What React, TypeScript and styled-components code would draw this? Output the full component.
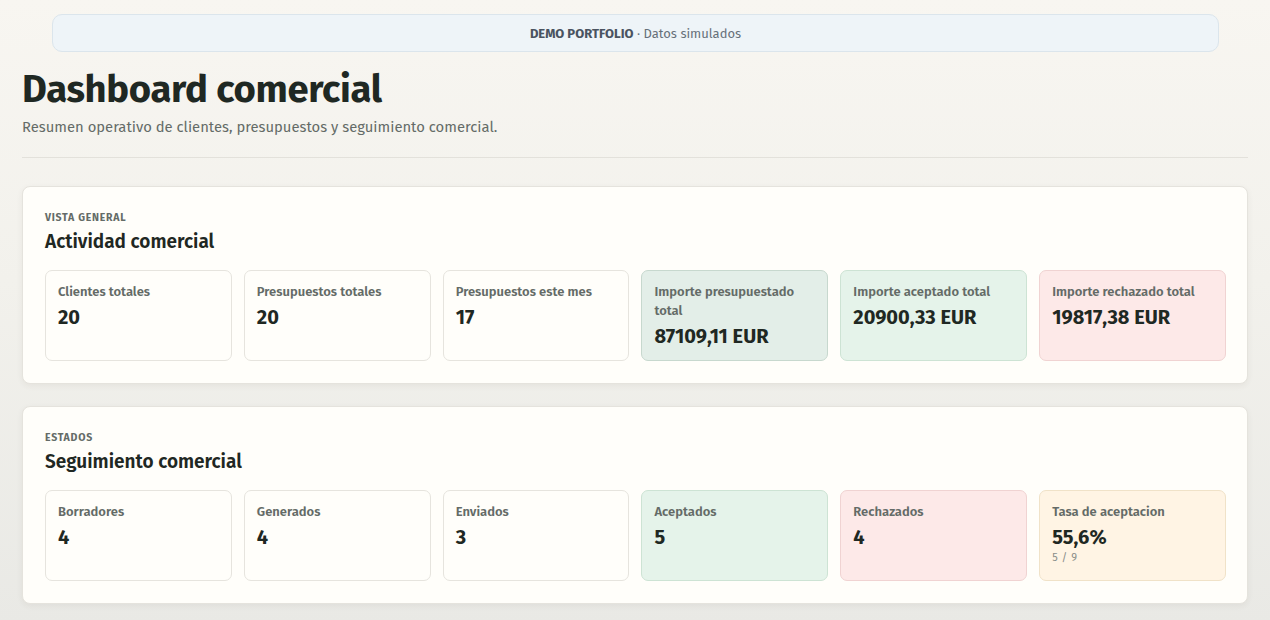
import React from 'react';
import styled, { createGlobalStyle } from 'styled-components';

type Tone = 'neutral' | 'slate' | 'green' | 'red' | 'amber';

interface Stat {
    label: string;
    value: string;
    note?: string;
    tone?: Tone;
}

const activity: Array<Stat> = [
    { label: 'Clientes totales', value: '20' },
    { label: 'Presupuestos totales', value: '20' },
    { label: 'Presupuestos este mes', value: '17' },
    { label: 'Importe presupuestado total', value: '87109,11 EUR', tone: 'slate' },
    { label: 'Importe aceptado total', value: '20900,33 EUR', tone: 'green' },
    { label: 'Importe rechazado total', value: '19817,38 EUR', tone: 'red' },
];

const states: Array<Stat> = [
    { label: 'Borradores', value: '4' },
    { label: 'Generados', value: '4' },
    { label: 'Enviados', value: '3' },
    { label: 'Aceptados', value: '5', tone: 'green' },
    { label: 'Rechazados', value: '4', tone: 'red' },
    { label: 'Tasa de aceptacion', value: '55,6%', note: '5 / 9', tone: 'amber' },
];

const tones: Record<Tone, { bg: string; border: string }> = {
    neutral: { bg: '#fffefa', border: '#e6e4de' },
    slate: { bg: '#e3eee8', border: '#c7d8ce' },
    green: { bg: '#e5f3ea', border: '#cde3d4' },
    red: { bg: '#fde9e8', border: '#f0d3d2' },
    amber: { bg: '#fff4e4', border: '#f0e2c8' },
};

const dark = `#1f2823`;
const muted = `#646b67`;

const GlobalStyle = createGlobalStyle`
    html, body {
        margin: 0;
        padding: 0;
    }
    body {
        min-height: 620px;
        background: linear-gradient(180deg, #f8f6f1 0%, #f2f1ec 45%, #e9e9e5 100%);
        font-family: "Fira Sans", "Noto Sans", "Open Sans", sans-serif;
        color: ${dark};
    }
`;

const Page = styled.main`
    padding: 14px 22px 20px;
    display: flex;
    flex-direction: column;
`;

const Banner = styled.div`
    margin: 0 29px 0 30px;
    height: 38px;
    box-sizing: border-box;
    border: 1px solid #dbe5ec;
    border-radius: 10px;
    background: #eef4f8;
    display: flex;
    align-items: center;
    justify-content: center;
    font-size: 13px;
    color: #66707a;
    strong {
        color: #4a5360;
        font-weight: 700;
    }
`;

const Header = styled.header`
    padding: 15px 0 21px;
    border-bottom: 1px solid #e3e1db;
    margin-bottom: 28px;
`;

const Title = styled.h1`
    margin: 0;
    font-size: 38.2px;
    line-height: 44px;
    font-weight: 700;
    letter-spacing: -0.3px;
    color: ${dark};
`;

const Subtitle = styled.p`
    margin: 7px 0 0;
    font-size: 14.8px;
    color: ${muted};
`;

const Panel = styled.section`
    background: #fffefa;
    border: 1px solid #e5e3dd;
    border-radius: 8px;
    box-shadow: 0 2px 6px rgba(60, 55, 40, 0.06);
    padding: 24px 21px 22px 22px;
    & + & {
        margin-top: 22px;
    }
`;

const Eyebrow = styled.div`
    font-size: 10.5px;
    font-weight: 700;
    letter-spacing: 0.75px;
    text-transform: uppercase;
    color: ${muted};
`;

const PanelTitle = styled.h2`
    margin: 6px 0 16px;
    font-size: 19px;
    line-height: 24px;
    font-weight: 600;
    color: ${dark};
`;

const Cards = styled.div`
    display: grid;
    grid-template-columns: repeat(6, 1fr);
    gap: 12px;
`;

const Card = styled.div<{ $tone: Tone }>`
    height: 91px;
    box-sizing: border-box;
    padding: 11px 12px;
    border-radius: 7px;
    background: ${p => tones[p.$tone].bg};
    border: 1px solid ${p => tones[p.$tone].border};
`;

const Label = styled.div`
    font-size: 13px;
    line-height: 19px;
    font-weight: 600;
    color: ${muted};
`;

const Value = styled.div`
    margin-top: 4px;
    font-size: 20px;
    line-height: 25px;
    font-weight: 700;
    color: ${dark};
`;

const Note = styled.div`
    margin-top: 1px;
    font-size: 11px;
    color: #8a8e8a;
    letter-spacing: 0.5px;
`;

const Section = ({ eyebrow, title, stats }: { eyebrow: string; title: string; stats: Array<Stat> }) => (
    <Panel>
        <Eyebrow>{eyebrow}</Eyebrow>
        <PanelTitle>{title}</PanelTitle>
        <Cards>
            {stats.map(s => (
                <Card key={s.label} $tone={s.tone || 'neutral'}>
                    <Label>{s.label}</Label>
                    <Value>{s.value}</Value>
                    {s.note && <Note>{s.note}</Note>}
                </Card>
            ))}
        </Cards>
    </Panel>
);

const App = () => (
    <>
        <GlobalStyle />
        <Page>
            <Banner>
                <strong>DEMO PORTFOLIO</strong>&nbsp;· Datos simulados
            </Banner>
            <Header>
                <Title>Dashboard comercial</Title>
                <Subtitle>Resumen operativo de clientes, presupuestos y seguimiento comercial.</Subtitle>
            </Header>
            <Section eyebrow="Vista general" title="Actividad comercial" stats={activity} />
            <Section eyebrow="Estados" title="Seguimiento comercial" stats={states} />
        </Page>
    </>
);

export default App;
